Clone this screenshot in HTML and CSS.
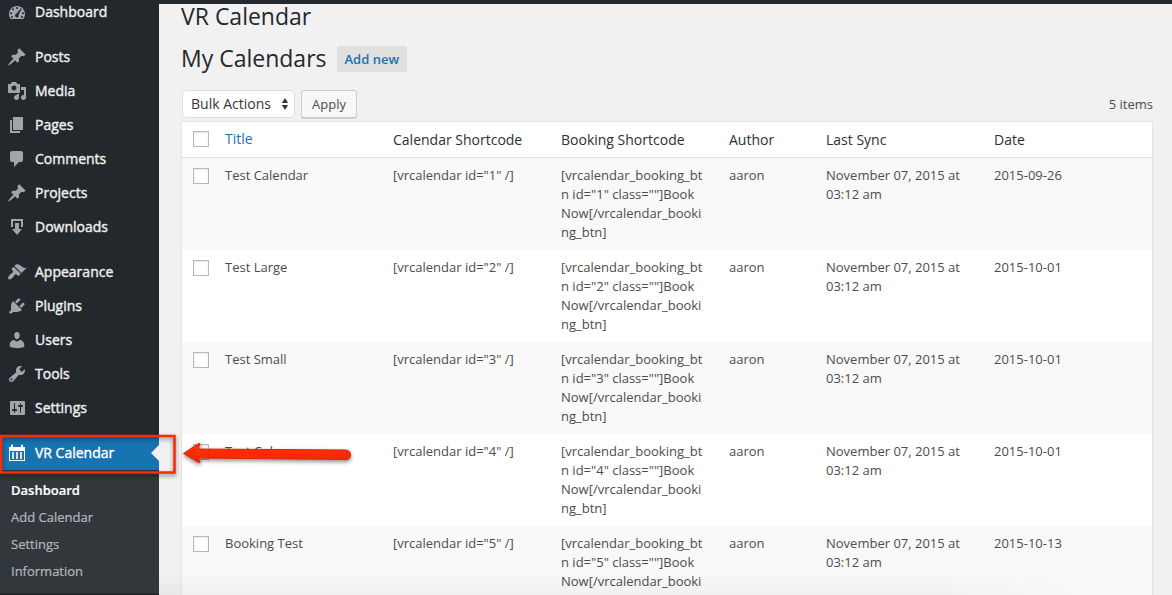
FILE: index.html
```html
<!DOCTYPE html>
<html lang="en">
<head>
<meta charset="utf-8">
<title>VR Calendar</title>
<link rel="stylesheet" href="styles.css">
</head>
<body>
<div class="topbar"></div>
<div class="layout">
  <nav class="sidebar">
    <ul class="menu">
      <li class="item"><svg class="icon" viewBox="0 0 20 20"><path fill-rule="evenodd" d="M3.76 17h12.48C17.34 15.63 18 13.9 18 12c0-4.41-3.58-8-8-8s-8 3.59-8 8c0 1.9.66 3.63 1.76 5zM10 5a1 1 0 1 1 0 2a1 1 0 1 1 0-2zM6 6.2a1 1 0 1 1 0 2a1 1 0 1 1 0-2zM14 6.200l.8.4-3.300 6.200c.5.800.3 1.900-.5 2.400-1.300.8-3-.1-3-1.600 0-.9.600-1.600 1.400-1.800zM4 10.300a1 1 0 1 1 0 2a1 1 0 1 1 0-2zM16 10.300a1 1 0 1 1 0 2a1 1 0 1 1 0-2zM5 14a1 1 0 1 1 0 2a1 1 0 1 1 0-2zM15 14a1 1 0 1 1 0 2a1 1 0 1 1 0-2z"/></svg><span>Dashboard</span></li>
      <li class="separator"></li>
      <li class="item"><svg class="icon" viewBox="0 0 20 20"><path d="M10.440 3.020l1.820-1.820 6.360 6.350-1.830 1.820c-1.050-.68-2.480-.57-3.410.36l-.75.75c-.92.93-1.040 2.350-.35 3.410l-1.830 1.820-2.410-2.410-2.800 2.790c-.42.42-3.380 2.710-3.800 2.290s1.860-3.390 2.280-3.810l2.790-2.790L4.100 9.360l1.830-1.820c1.050.69 2.480.57 3.400-.36l.75-.75c.93-.92 1.050-2.350.36-3.410z"/></svg><span>Posts</span></li>
      <li class="item"><svg class="icon" viewBox="0 0 20 20"><path d="M13 11V4c0-.55-.45-1-1-1h-1.670L9 1H5L3.670 3H2c-.55 0-1 .45-1 1v7c0 .55.45 1 1 1h10c.55 0 1-.45 1-1zM7 4.500c1.380 0 2.500 1.120 2.500 2.500S8.380 9.500 7 9.500 4.500 8.380 4.500 7 5.620 4.500 7 4.500zM14 6h5v10.500c0 1.380-1.120 2.500-2.500 2.500S14 17.880 14 16.500s1.120-2.500 2.500-2.500c.17 0 .34.02.5.05V9h-3V6zm-4 8.050V13h2v3.500c0 1.380-1.120 2.500-2.500 2.500S7 17.880 7 16.500 8.120 14 9.500 14c.17 0 .34.02.5.05z" fill-rule="evenodd"/></svg><span>Media</span></li>
      <li class="item"><svg class="icon" viewBox="0 0 20 20"><path d="M6 15V2h10v13H6zm-1 1h8v2H3V5h2v11z"/></svg><span>Pages</span></li>
      <li class="item"><svg class="icon" viewBox="0 0 20 20"><path d="M5 2h9c1.100 0 2 .9 2 2v7c0 1.100-.9 2-2 2h-2l-5 5v-5H5c-1.100 0-2-.9-2-2V4c0-1.100.9-2 2-2z"/></svg><span>Comments</span></li>
      <li class="item"><svg class="icon" viewBox="0 0 20 20"><path d="M10.440 3.020l1.820-1.820 6.360 6.350-1.830 1.820c-1.050-.68-2.480-.57-3.410.36l-.75.75c-.92.93-1.040 2.350-.35 3.410l-1.830 1.820-2.410-2.410-2.800 2.790c-.42.42-3.380 2.710-3.800 2.290s1.860-3.390 2.280-3.810l2.790-2.790L4.100 9.360l1.830-1.820c1.050.69 2.480.57 3.400-.36l.75-.75c.93-.92 1.050-2.350.36-3.410z"/></svg><span>Projects</span></li>
      <li class="item"><svg class="icon" viewBox="0 0 20 20"><path d="M14.010 4v6h2V2H4v8h2.010V4h8zm-2 2v6h3l-5 6-5-6h3V6h4z"/></svg><span>Downloads</span></li>
      <li class="separator"></li>
      <li class="item"><svg class="icon" viewBox="0 0 20 20"><path d="M14.480 11.060L7.410 3.990l1.500-1.500c.5-.56 2.300-.47 3.510.32 1.210.8 1.430 1.280 2.910 2.100 1.180.64 2.450 1.260 4.450.85zm-.71.71L6.700 4.700 4.930 6.470c-.39.39-.39 1.020 0 1.410l1.060 1.060c.39.39.39 1.030 0 1.420-.6.6-1.430 1.110-2.210 1.690-.35.26-.7.53-1.010.84C1.430 14.230.4 16.080 1.400 17.070c.99 1 2.840-.03 4.180-1.360.31-.31.58-.66.85-1.020.57-.78 1.080-1.610 1.690-2.210.39-.39 1.020-.39 1.410 0l1.060 1.060c.39.39 1.020.39 1.410 0z"/></svg><span>Appearance</span></li>
      <li class="item"><svg class="icon" viewBox="0 0 20 20"><path d="M13.110 4.360L9.870 7.600 8 5.730l3.240-3.240c.35-.34 1.050-.2 1.560.32.52.51.66 1.210.31 1.550zm-8 1.770l.91-1.120 9.010 9.010-1.190.84c-.71.71-2.630 1.160-3.820 1.160H6.140L4.900 17.260c-.59.59-1.540.59-2.120 0-.59-.58-.59-1.530 0-2.120l1.240-1.240v-3.880c0-1.130.4-3.190 1.090-3.890zm7.260 3.970l3.240-3.240c.34-.35 1.040-.21 1.550.31.52.51.66 1.210.31 1.550l-3.240 3.250z"/></svg><span>Plugins</span></li>
      <li class="item"><svg class="icon" viewBox="0 0 20 20"><path d="M10 9.250c-2.270 0-2.730-3.440-2.730-3.440C7 4.020 7.820 2 9.970 2c2.160 0 2.980 2.020 2.710 3.810 0 0-.41 3.440-2.680 3.440zm0 2.570L12.720 10c2.390 0 4.520 2.330 4.520 4.530v2.490s-3.650 1.130-7.240 1.130c-3.650 0-7.240-1.130-7.240-1.130v-2.490c0-2.250 1.940-4.480 4.470-4.480z"/></svg><span>Users</span></li>
      <li class="item"><svg class="icon" viewBox="0 0 20 20"><path fill-rule="evenodd" d="M16.680 9.770c-1.340 1.340-3.300 1.670-4.950.99l-5.410 6.520c-.99.99-2.590.99-3.580 0s-.99-2.590 0-3.570l6.520-5.420c-.68-1.650-.35-3.610.99-4.950 1.280-1.280 3.120-1.620 4.720-1.060l-2.890 2.890 2.820 2.820 2.860-2.870c.53 1.580.18 3.390-1.080 4.650zM3.810 16.210c.4.39 1.040.39 1.430 0 .4-.4.4-1.040 0-1.430-.39-.4-1.030-.4-1.430 0-.39.39-.39 1.030 0 1.430z"/></svg><span>Tools</span></li>
      <li class="item"><svg class="icon" viewBox="0 0 20 20"><path fill-rule="evenodd" d="M18 16V4c0-.55-.45-1-1-1H4c-.55 0-1 .45-1 1v12c0 .55.45 1 1 1h13c.55 0 1-.45 1-1zM8 11h1c.55 0 1 .45 1 1s-.45 1-1 1H8v1.500c0 .28-.22.5-.5.5s-.5-.22-.5-.5V13H6c-.55 0-1-.45-1-1s.45-1 1-1h1V5.500c0-.28.22-.5.5-.5s.5.22.5.5V11zm5-2h-1c-.55 0-1-.45-1-1s.45-1 1-1h1V5.500c0-.28.22-.5.5-.5s.5.22.5.5V7h1c.55 0 1 .45 1 1s-.45 1-1 1h-1v5.500c0 .28-.22.5-.5.5s-.5-.22-.5-.5V9z"/></svg><span>Settings</span></li>
      <li class="separator"></li>
      <li class="item current"><svg class="icon" viewBox="0 0 20 20"><path fill-rule="evenodd" d="M2 4h2V2.500a1 1 0 0 1 2 0V4h8V2.500a1 1 0 0 1 2 0V4h2v14H2zM3 8v9h14V8zM5.200 9h1.600v7H5.200zM9.200 9h1.600v7H9.200zM13.200 9h1.600v7h-1.600z"/></svg><span>VR Calendar</span></li>
    </ul>
    <ul class="submenu">
      <li class="active">Dashboard</li>
      <li>Add Calendar</li>
      <li>Settings</li>
      <li>Information</li>
    </ul>
  </nav>
  <main class="content">
    <h1 class="heading">VR Calendar</h1>
    <div class="title-row"><h2 class="heading">My Calendars</h2><a class="add-new">Add new</a></div>
    <div class="actions">
      <div class="select"><span>Bulk Actions</span><svg width="8" height="12" viewBox="0 0 8 12"><path d="M4 0l3.200 5H.8zM4 12l3.200-5H.8z"/></svg></div>
      <div class="button">Apply</div>
      <span class="count">5 items</span>
    </div>
    <table class="list">
      <colgroup><col class="col-check"><col><col><col><col class="col-author"><col><col></colgroup>
      <thead><tr><th><i class="box"></i></th><th class="sorted">Title</th><th>Calendar Shortcode</th><th>Booking Shortcode</th><th>Author</th><th>Last Sync</th><th>Date</th></tr></thead>
      <tbody>
        <tr><td><i class="box"></i></td><td>Test Calendar</td><td>[vrcalendar id="1" /]</td><td>[vrcalendar_booking_bt<br>n id="1" class=""]Book<br>Now[/vrcalendar_booki<br>ng_btn]</td><td>aaron</td><td>November 07, 2015 at<br>03:12 am</td><td>2015-09-26</td></tr>
        <tr><td><i class="box"></i></td><td>Test Large</td><td>[vrcalendar id="2" /]</td><td>[vrcalendar_booking_bt<br>n id="2" class=""]Book<br>Now[/vrcalendar_booki<br>ng_btn]</td><td>aaron</td><td>November 07, 2015 at<br>03:12 am</td><td>2015-10-01</td></tr>
        <tr><td><i class="box"></i></td><td>Test Small</td><td>[vrcalendar id="3" /]</td><td>[vrcalendar_booking_bt<br>n id="3" class=""]Book<br>Now[/vrcalendar_booki<br>ng_btn]</td><td>aaron</td><td>November 07, 2015 at<br>03:12 am</td><td>2015-10-01</td></tr>
        <tr><td><i class="box"></i></td><td>Test Colors</td><td>[vrcalendar id="4" /]</td><td>[vrcalendar_booking_bt<br>n id="4" class=""]Book<br>Now[/vrcalendar_booki<br>ng_btn]</td><td>aaron</td><td>November 07, 2015 at<br>03:12 am</td><td>2015-10-01</td></tr>
        <tr><td><i class="box"></i></td><td>Booking Test</td><td>[vrcalendar id="5" /]</td><td>[vrcalendar_booking_bt<br>n id="5" class=""]Book<br>Now[/vrcalendar_booki</td><td>aaron</td><td>November 07, 2015 at<br>03:12 am</td><td>2015-10-13</td></tr>
      </tbody>
    </table>
  </main>
</div>
<div class="bottom-shade"></div>
<svg class="annotation" width="370" height="60" viewBox="0 425 370 60">
  <defs><linearGradient id="red" x1="0" y1="0" x2="0" y2="1"><stop offset="0" stop-color="#ff3208"/><stop offset="1" stop-color="#f92400"/></linearGradient></defs>
  <rect class="frame" x="1" y="436" width="173.500" height="36.500"/>
  <path class="arrow" fill="url(#red)" d="M183.500 453.500L198.500 443.500Q200.500 443 200 445L198 449L346 450Q350.500 450.500 350.500 455Q350.500 459.500 346 459.500L198 458L200 461.500Q200.500 463.500 198.500 462.500Z"/>
</svg>
</body>
</html>
```
FILE: styles.css
```css
* { box-sizing: border-box; }
html, body { height: 100%; }
body {
  margin: 0;
  overflow: hidden;
  background: #f1f1f1;
  color: #4c4c4c;
  font: 13px/19px "Open Sans", sans-serif;
}
ul { list-style: none; margin: 0; padding: 0; }
.topbar { height: 4px; background: #23282d; }
.layout { display: flex; height: 591px; }

.sidebar { flex: 0 0 159px; background: #23282d; margin-top: -4px; height: 595px; overflow: hidden; }
.menu { margin-top: -5px; }
.item {
  position: relative;
  display: flex;
  align-items: center;
  height: 34px;
  padding-left: 7px;
  gap: 8px;
  color: #eee;
  font-size: 14px;
  line-height: 18px;
  -webkit-text-stroke: .4px currentColor;
}
.icon { width: 20px; height: 20px; fill: #a0a5aa; flex: none; -webkit-text-stroke: 0; }
.separator { height: 11px; }
.current { background: #1873b1; color: #fff; }
.current .icon { fill: #fff; }
.current::after {
  content: "";
  position: absolute;
  right: 0;
  top: 9px;
  border: 8px solid transparent;
  border-left: 0;
  border-right-color: #f1f1f1;
}
.submenu { background: #32373c; padding: 7px 0 8px 11px; color: #b4b9be; -webkit-text-stroke: .2px currentColor; }
.submenu li { height: 27px; line-height: 27px; }
.submenu .active { color: #fff; font-weight: 600; }

.content { flex: 1; min-width: 0; padding: 0 19px 0 22px; }
.heading { margin: 0; font-size: 23px; font-weight: 400; line-height: 29px; color: #23282d; }
h1.heading { margin-top: -2px; }
.title-row { display: flex; align-items: center; gap: 10px; height: 29px; margin-top: 13px; }
.add-new {
  padding: 0 8px;
  height: 26px;
  line-height: 26px;
  background: #e0e0e0;
  border-radius: 2px;
  color: #1873b1;
  font-weight: 600;
}
.actions { display: flex; align-items: center; height: 30px; margin: 16px 0 2px 1px; }
.select {
  display: flex;
  align-items: center;
  justify-content: space-between;
  width: 113px;
  height: 28px;
  padding: 0 5px 0 8px;
  border: 1px solid #ddd;
  border-radius: 5px;
  background: #fff;
  color: #32373c;
  font-size: 14px;
}
.select span { padding-bottom: 2px; }
.select svg { fill: #32373c; }
.button {
  margin-left: 6px;
  width: 56px;
  height: 28px;
  border: 1px solid #ccc;
  border-radius: 3px;
  background: #f7f7f7;
  box-shadow: 0 1px 0 #ccc;
  line-height: 26px;
  text-align: center;
}
.count { margin-left: auto; }

.list {
  width: 972px;
  table-layout: fixed;
  border: 1px solid #e3e3e3;
  border-spacing: 0;
  background: #fff;
}
.col-check { width: 33px; }
.col-author { width: 97px; }
.list th {
  height: 36px;
  padding: 0 10px;
  border-bottom: 1px solid #e1e1e1;
  color: #2b3035;
  font-size: 14px;
  font-weight: 400;
  text-align: left;
}
.list .sorted { padding-bottom: 2px; color: #1873b1; }
.list td { height: 92px; padding: 8px 10px; vertical-align: top; white-space: nowrap; }
.list tbody tr:nth-child(odd) { background: #f9f9f9; }
.box {
  display: block;
  width: 16px;
  height: 16px;
  border: 1px solid #b4b9be;
  background: #fff;
  box-shadow: inset 0 1px 2px rgba(0, 0, 0, .1);
}
.list th .box { margin-bottom: 2px; }
.list td .box { margin-top: 2px; }
.list tr > :first-child { padding-left: 11px; padding-right: 0; }

.bottom-shade {
  position: absolute;
  left: 159px;
  bottom: 0;
  width: 920px;
  height: 24px;
  background: linear-gradient(to bottom, transparent, rgba(0, 0, 0, .03));
  -webkit-mask-image: linear-gradient(to right, #000 85%, transparent);
}
.annotation { position: absolute; left: 0; top: 425px; overflow: visible; }
.frame { fill: none; stroke: #fa2b05; stroke-width: 2.500px; filter: drop-shadow(0 2px 2px rgba(0, 0, 0, .5)); }
.arrow { stroke: #d92a0b; stroke-width: 1px; filter: drop-shadow(0 2px 2px rgba(0, 0, 0, .45)); }
```
